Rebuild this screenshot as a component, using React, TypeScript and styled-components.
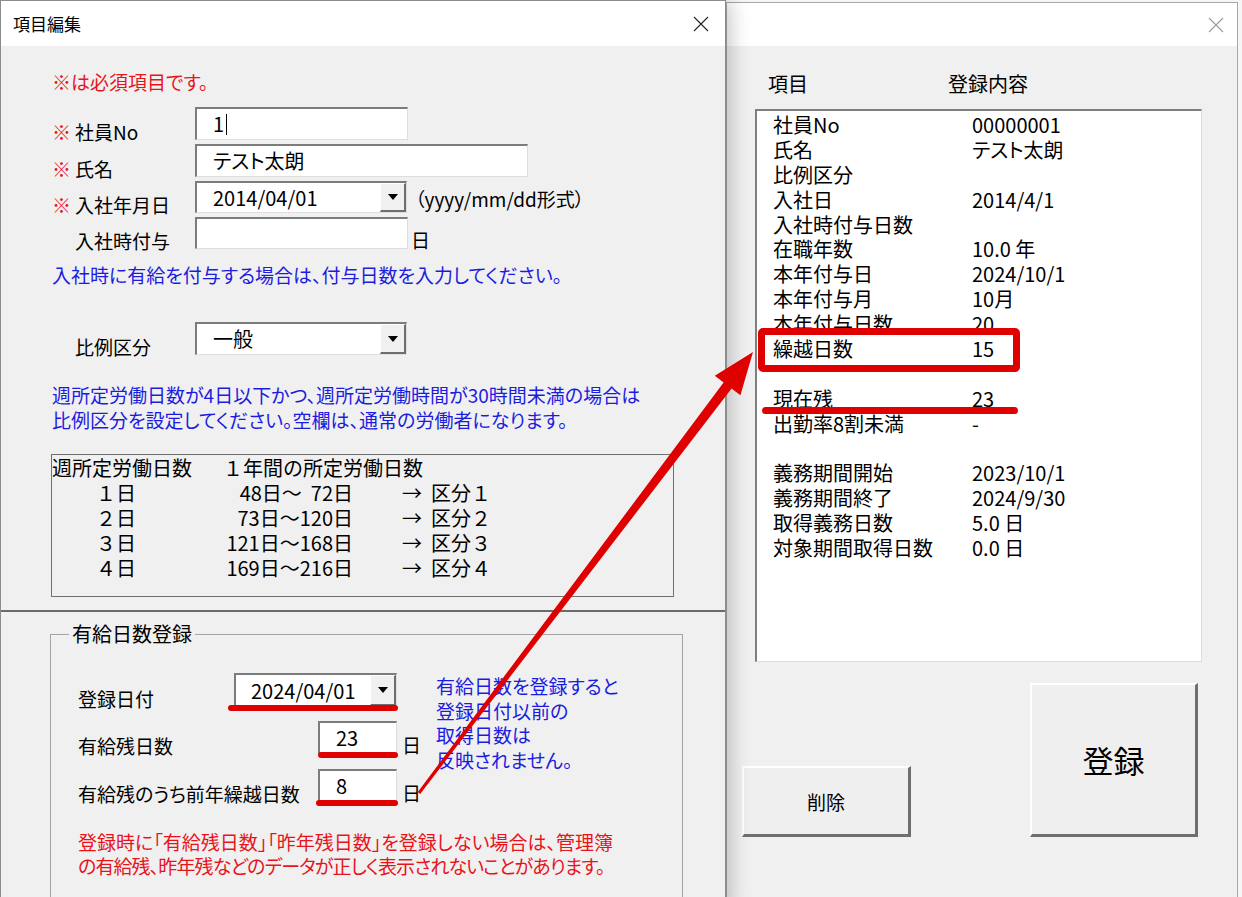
import styled, { createGlobalStyle } from "styled-components";

const RED = "#e8141c";
const BLUE = "#1c1ce0";
const MARK = "#df0000";

const GlobalStyle = createGlobalStyle`
  html, body {
    margin: 0;
    padding: 0;
  }
  body {
    font-family: "Noto Sans CJK JP", "Noto Sans", sans-serif;
    font-feature-settings: "palt";
    color: #000;
    background: #f4f4f4;
  }
`;

const Screen = styled.div`
  position: relative;
  width: 1242px;
  height: 897px;
  overflow: hidden;
  display: flex;
  align-items: flex-start;
  padding: 0 4px 0 0;
  box-sizing: border-box;
  background: #f6f6f6;
`;

const Window = styled.div<{ $active?: boolean }>`
  position: relative;
  z-index: ${(p) => (p.$active ? 2 : 1)};
  flex: ${(p) => (p.$active ? "0 0 726px" : "1 1 auto")};
  height: 910px;
  margin-top: ${(p) => (p.$active ? 0 : 2)}px;
  box-sizing: border-box;
  background: #f0f0f0;
  border: 1px solid ${(p) => (p.$active ? "#8c8c8c" : "#a8a8a8")};
  border-bottom: none;
  box-shadow: ${(p) => (p.$active ? "5px 0 18px rgba(0, 0, 0, 0.22)" : "none")};
`;

const TitleBar = styled.div<{ $h: number }>`
  height: ${(p) => p.$h}px;
  background: #fff;
  display: flex;
  align-items: center;
  justify-content: space-between;
  padding: 0 16px 0 12px;
  box-sizing: border-box;
`;

const Title = styled.span`
  font-size: 17px;
  line-height: 20px;
`;

const CloseIcon = ({ color }: { color: string }) => (
  <svg width="16" height="16" viewBox="0 0 16 16">
    <path d="M1 1 L15 15 M15 1 L1 15" stroke={color} strokeWidth="1.1" />
  </svg>
);

/* ---------- left dialog ---------- */

const UpperSection = styled.div`
  height: 564px;
  box-sizing: border-box;
  padding: 23px 0 0 51px;
`;

const Note = styled.div<{ $color: string; $lh?: number }>`
  color: ${(p) => p.$color};
  font-size: 19px;
  line-height: ${(p) => p.$lh ?? 24}px;
  white-space: nowrap;
`;

const Fields = styled.div<{ $top: number; $gap?: number }>`
  display: flex;
  flex-direction: column;
  gap: ${(p) => p.$gap ?? 4}px;
  margin-top: ${(p) => p.$top}px;
`;

const FieldRow = styled.div<{ $h: number }>`
  display: flex;
  align-items: flex-end;
  height: ${(p) => p.$h}px;
`;

const FieldLabel = styled.div<{ $w: number }>`
  width: ${(p) => p.$w}px;
  flex-shrink: 0;
  font-size: 19px;
  line-height: 20px;
  margin-bottom: -2px;
  white-space: nowrap;
`;

const Mark = styled.span`
  display: inline-block;
  width: 23px;
  color: ${RED};
`;

const Suffix = styled.span<{ $gap: number }>`
  margin-left: ${(p) => p.$gap}px;
  font-size: 19px;
  line-height: 20px;
  margin-bottom: -1px;
  white-space: nowrap;
`;

const Hint = styled(Suffix)`
  margin-bottom: 4px;
`;

const Field = styled.div<{ $w: number; $pad?: number; $mark?: number }>`
  position: relative;
  width: ${(p) => p.$w}px;
  height: 100%;
  flex-shrink: 0;
  box-sizing: border-box;
  display: flex;
  align-items: center;
  background: #fff;
  border-top: 2px solid #7c7c7c;
  border-left: 2px solid #7c7c7c;
  border-right: 1px solid #dedede;
  border-bottom: 1px solid #dedede;
  padding-left: ${(p) => p.$pad ?? 16}px;
  font-size: 20px;
  white-space: nowrap;

  ${(p) =>
    p.$mark !== undefined &&
    `
    &::after {
      content: "";
      position: absolute;
      left: ${p.$mark}px;
      right: -2px;
      bottom: -5px;
      height: 6px;
      border-radius: 3px;
      background: ${MARK};
    }
  `}
`;

const FieldText = styled.span`
  flex: 1;
  line-height: 24px;
`;

const Caret = styled.span`
  display: inline-block;
  width: 1px;
  height: 21px;
  margin-left: 2px;
  vertical-align: -3px;
  background: #000;
`;

const DropButton = styled.div`
  width: 26px;
  height: 100%;
  box-sizing: border-box;
  display: flex;
  align-items: center;
  justify-content: center;
  background: #f0f0f0;
  border-top: 1px solid #fff;
  border-left: 1px solid #fff;
  border-right: 2px solid #6e6e6e;
  border-bottom: 2px solid #6e6e6e;

  &::before {
    content: "";
    border-left: 5px solid transparent;
    border-right: 5px solid transparent;
    border-top: 6px solid #000;
  }
`;

const RatioTable = styled.div`
  width: 623px;
  height: 143px;
  margin: 22px 0 0 -1px;
  box-sizing: border-box;
  border: 1px solid #707070;
  font-size: 20px;
  line-height: 25px;
  font-feature-settings: normal;
`;

const RatioRow = styled.div`
  display: flex;
  white-space: pre;
`;

const DayCell = styled.span<{ $pad?: number }>`
  width: 171px;
  padding-left: ${(p) => p.$pad ?? 0}px;
  box-sizing: border-box;
`;

const RangeCell = styled.span`
  width: 130px;
  text-align: right;
`;

const ClassCell = styled.span`
  margin-left: 49px;
`;

const LowerSection = styled.div`
  border-top: 2px solid #6b6b6b;
  padding: 10px 0 0 49px;
`;

const GroupBox = styled.fieldset`
  width: 633px;
  height: 320px;
  margin: 0;
  padding: 0 0 0 27px;
  box-sizing: border-box;
  border: 1px solid #a4a4a4;
`;

const GroupLegend = styled.legend`
  margin-left: -9px;
  padding: 0 3px;
  font-size: 20px;
  line-height: 24px;
`;

const GroupInner = styled.div`
  display: flex;
  margin-top: 27px;
`;

const GroupFields = styled.div`
  width: 358px;
  display: flex;
  flex-direction: column;
`;

const SideNote = styled(Note)`
  margin-top: 1px;
`;

const WarnNote = styled(Note)`
  margin-top: 28px;
`;

const Tight = styled.span`
  letter-spacing: -0.9px;
`;

/* ---------- right window ---------- */

const RightBody = styled.div`
  padding: 26px 0 0 15px;
`;

const ListHeader = styled.div`
  display: flex;
  margin-left: 26px;
  font-size: 20px;
  line-height: 24px;
`;

const HeaderCell = styled.span<{ $w?: number }>`
  width: ${(p) => (p.$w ? `${p.$w}px` : "auto")};
`;

const ListBox = styled.div`
  width: 447px;
  height: 553px;
  margin: 13px 0 0 13px;
  box-sizing: border-box;
  background: #fff;
  border-top: 2px solid #7f7f7f;
  border-left: 2px solid #7f7f7f;
  border-right: 1px solid #dcdcdc;
  border-bottom: 1px solid #dcdcdc;
  padding-top: 2px;
`;

const ListRow = styled.div<{ $mark?: "box" | "line" }>`
  position: relative;
  display: grid;
  grid-template-columns: 199px 1fr;
  height: 24.9px;
  padding-left: 16px;
  font-size: 20px;
  line-height: 24.9px;
  white-space: nowrap;

  ${(p) =>
    p.$mark === "box" &&
    `
    &::after {
      content: "";
      position: absolute;
      left: 1px;
      top: -9px;
      width: 262px;
      height: 44px;
      box-sizing: border-box;
      border: 7px solid ${MARK};
      border-radius: 5px;
    }
  `}

  ${(p) =>
    p.$mark === "line" &&
    `
    &::after {
      content: "";
      position: absolute;
      left: 5px;
      top: 20px;
      width: 256px;
      height: 7px;
      border-radius: 4px;
      background: ${MARK};
    }
  `}
`;

const ButtonRow = styled.div`
  width: 456px;
  margin-top: 21px;
  display: flex;
  justify-content: space-between;
  align-items: flex-end;
`;

const Button = styled.div<{ $w: number; $h: number; $size: number }>`
  width: ${(p) => p.$w}px;
  height: ${(p) => p.$h}px;
  box-sizing: border-box;
  display: flex;
  align-items: center;
  justify-content: center;
  background: #efefef;
  border-top: 2px solid #fff;
  border-left: 2px solid #fff;
  border-right: 3px solid #6f6f6f;
  border-bottom: 3px solid #6f6f6f;
  font-size: ${(p) => p.$size}px;
`;

const Arrow = styled.svg`
  position: absolute;
  inset: 0;
  z-index: 10;
  pointer-events: none;
`;

const listItems: { label: string; value: string; mark?: "box" | "line" }[] = [
  { label: "社員No", value: "00000001" },
  { label: "氏名", value: "テスト太朗" },
  { label: "比例区分", value: "" },
  { label: "入社日", value: "2014/4/1" },
  { label: "入社時付与日数", value: "" },
  { label: "在職年数", value: "10.0 年" },
  { label: "本年付与日", value: "2024/10/1" },
  { label: "本年付与月", value: "10月" },
  { label: "本年付与日数", value: "20" },
  { label: "繰越日数", value: "15", mark: "box" },
  { label: "", value: "" },
  { label: "現在残", value: "23", mark: "line" },
  { label: "出勤率8割未満", value: "-" },
  { label: "", value: "" },
  { label: "義務期間開始", value: "2023/10/1" },
  { label: "義務期間終了", value: "2024/9/30" },
  { label: "取得義務日数", value: "5.0 日" },
  { label: "対象期間取得日数", value: "0.0 日" },
];

const ratioRows = [
  ["１日", "48日～  72日", "区分１"],
  ["２日", "73日～120日", "区分２"],
  ["３日", "121日～168日", "区分３"],
  ["４日", "169日～216日", "区分４"],
];

export default function App() {
  return (
    <>
      <GlobalStyle />
      <Screen>
        <Window $active>
          <TitleBar $h={45}>
            <Title>項目編集</Title>
            <CloseIcon color="#222" />
          </TitleBar>

          <UpperSection>
            <Note $color={RED} $lh={26}>
              ※は必須項目です。
            </Note>

            <Fields $top={12}>
              <FieldRow $h={33}>
                <FieldLabel $w={143}>
                  <Mark>※</Mark>社員No
                </FieldLabel>
                <Field $w={213}>
                  <FieldText>
                    1<Caret />
                  </FieldText>
                </Field>
              </FieldRow>
              <FieldRow $h={33}>
                <FieldLabel $w={143}>
                  <Mark>※</Mark>氏名
                </FieldLabel>
                <Field $w={333}>
                  <FieldText>テスト太朗</FieldText>
                </Field>
              </FieldRow>
              <FieldRow $h={32}>
                <FieldLabel $w={143}>
                  <Mark>※</Mark>入社年月日
                </FieldLabel>
                <Field $w={212}>
                  <FieldText>2014/04/01</FieldText>
                  <DropButton />
                </Field>
                <Hint $gap={8}>（yyyy/mm/dd形式）</Hint>
              </FieldRow>
              <FieldRow $h={32}>
                <FieldLabel $w={143}>
                  <Mark />
                  入社時付与
                </FieldLabel>
                <Field $w={213} />
                <Suffix $gap={3}>日</Suffix>
              </FieldRow>
            </Fields>

            <Note $color={BLUE} style={{ marginTop: 14 }}>
              入社時に有給を付与する場合は、付与日数を入力してください。
            </Note>

            <Fields $top={35}>
              <FieldRow $h={33}>
                <FieldLabel $w={143}>
                  <Mark />
                  比例区分
                </FieldLabel>
                <Field $w={212}>
                  <FieldText>一般</FieldText>
                  <DropButton />
                </Field>
              </FieldRow>
            </Fields>

            <Note $color={BLUE} $lh={25} style={{ marginTop: 27 }}>
              週所定労働日数が4日以下かつ、週所定労働時間が30時間未満の場合は
              <br />
              比例区分を設定してください。空欄は、通常の労働者になります。
            </Note>

            <RatioTable>
              <RatioRow>
                <DayCell>週所定労働日数</DayCell>
                <span>１年間の所定労働日数</span>
              </RatioRow>
              {ratioRows.map(([day, range, cls]) => (
                <RatioRow key={day}>
                  <DayCell $pad={44}>{day}</DayCell>
                  <RangeCell>{range}</RangeCell>
                  <ClassCell>→  {cls}</ClassCell>
                </RatioRow>
              ))}
            </RatioTable>
          </UpperSection>

          <LowerSection>
            <GroupBox>
              <GroupLegend>有給日数登録</GroupLegend>
              <GroupInner>
                <GroupFields>
                  <FieldRow $h={34}>
                    <FieldLabel $w={156}>登録日付</FieldLabel>
                    <Field $w={163} $pad={15} $mark={-8}>
                      <FieldText>2024/04/01</FieldText>
                      <DropButton />
                    </Field>
                  </FieldRow>
                  <FieldRow $h={33} style={{ marginTop: 14 }}>
                    <FieldLabel $w={240}>有給残日数</FieldLabel>
                    <Field $w={79} $mark={-2}>
                      <FieldText>23</FieldText>
                    </Field>
                    <Suffix $gap={5}>日</Suffix>
                  </FieldRow>
                  <FieldRow $h={33} style={{ marginTop: 15 }}>
                    <FieldLabel $w={240}>有給残のうち前年繰越日数</FieldLabel>
                    <Field $w={79} $mark={-4}>
                      <FieldText>8</FieldText>
                    </Field>
                    <Suffix $gap={5}>日</Suffix>
                  </FieldRow>
                </GroupFields>
                <SideNote $color={BLUE} $lh={24.7}>
                  有給日数を登録すると
                  <br />
                  登録日付以前の
                  <br />
                  取得日数は
                  <br />
                  反映されません。
                </SideNote>
              </GroupInner>
              <WarnNote $color={RED}>
                登録時に「有給残日数」「昨年残日数」を登録しない場合は、管理簿
                <br />
                <Tight>の有給残、昨年残などのデータが正しく表示されないことがあります。</Tight>
              </WarnNote>
            </GroupBox>
          </LowerSection>
        </Window>

        <Window>
          <TitleBar $h={43} style={{ paddingRight: 13 }}>
            <span />
            <CloseIcon color="#9a9a9a" />
          </TitleBar>
          <RightBody>
            <ListHeader>
              <HeaderCell $w={180}>項目</HeaderCell>
              <HeaderCell>登録内容</HeaderCell>
            </ListHeader>
            <ListBox>
              {listItems.map((item, i) => (
                <ListRow key={i} $mark={item.mark}>
                  <span>{item.label}</span>
                  <span>{item.value}</span>
                </ListRow>
              ))}
            </ListBox>
            <ButtonRow>
              <Button $w={169} $h={71} $size={19}>
                削除
              </Button>
              <Button $w={168} $h={154} $size={31}>
                登録
              </Button>
            </ButtonRow>
          </RightBody>
        </Window>

        <Arrow width="1242" height="897" viewBox="0 0 1242 897">
          <polygon
            points="417.8,792.1 723.6,382.5 714.8,375.8 753,352 740.4,395.2 731.6,388.5 420.2,793.9"
            fill={MARK}
          />
        </Arrow>
      </Screen>
    </>
  );
}
